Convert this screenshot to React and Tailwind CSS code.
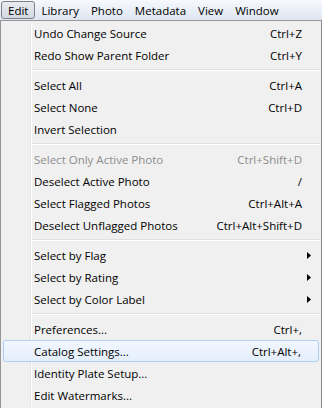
import React from 'react';

const font = { fontFamily: '"Open Sans", "Noto Sans", sans-serif' };

const groups = [
  [
    { label: 'Undo Change Source', shortcut: 'Ctrl+Z' },
    { label: 'Redo Show Parent Folder', shortcut: 'Ctrl+Y' },
  ],
  [
    { label: 'Select All', shortcut: 'Ctrl+A' },
    { label: 'Select None', shortcut: 'Ctrl+D' },
    { label: 'Invert Selection' },
  ],
  [
    { label: 'Select Only Active Photo', shortcut: 'Ctrl+Shift+D', disabled: true },
    { label: 'Deselect Active Photo', shortcut: '/' },
    { label: 'Select Flagged Photos', shortcut: 'Ctrl+Alt+A' },
    { label: 'Deselect Unflagged Photos', shortcut: 'Ctrl+Alt+Shift+D' },
  ],
  [
    { label: 'Select by Flag', submenu: true },
    { label: 'Select by Rating', submenu: true },
    { label: 'Select by Color Label', submenu: true },
  ],
  [
    { label: 'Preferences...', shortcut: 'Ctrl+,' },
    { label: 'Catalog Settings...', shortcut: 'Ctrl+Alt+,', active: true },
    { label: 'Identity Plate Setup...' },
    { label: 'Edit Watermarks...' },
  ],
];

const menus = ['Edit', 'Library', 'Photo', 'Metadata', 'View', 'Window'];

const Gutter = () => (
  <>
    <div className="w-[29px] shrink-0" />
    <div className="w-px self-stretch bg-[#e2e3e3]" />
    <div className="w-px self-stretch bg-white" />
  </>
);

const Arrow = () => (
  <svg width="4" height="7" viewBox="0 0 4 7" className="absolute right-[10px] top-[8px]">
    <path d="M0 0 L4 3.5 L0 7 Z" fill="#000" />
  </svg>
);

const MenuItem = ({ item }) => {
  const textCls = item.disabled ? 'text-[#8d8d8d]' : 'text-black';
  if (item.active) {
    return (
      <div className="h-[22px] px-[2px]">
        <div className="relative h-full flex items-center rounded-[3px] border border-[#aecff7] bg-gradient-to-b from-[#f2f7fe] to-[#e4eefb] pl-[30px] pr-[17px] pt-px">
          <span className={`flex-1 ${textCls}`}>{item.label}</span>
          {item.shortcut && <span className={textCls}>{item.shortcut}</span>}
        </div>
      </div>
    );
  }
  return (
    <div className="relative h-[22px] flex">
      <Gutter />
      <div className="flex-1 flex items-center pl-[2px] pr-[19px] pt-px">
        <span className={`flex-1 ${textCls}`}>{item.label}</span>
        {item.shortcut && <span className={textCls}>{item.shortcut}</span>}
      </div>
      {item.submenu && <Arrow />}
    </div>
  );
};

const Separator = () => (
  <div className="h-[8px] flex">
    <Gutter />
    <div className="flex-1 flex flex-col pt-[3px] pr-px">
      <div className="h-px bg-[#e0e0e0]" />
      <div className="h-px bg-white" />
    </div>
  </div>
);

export default function App() {
  return (
    <div className="w-[322px] h-[408px] overflow-hidden bg-white text-[11.5px] leading-none" style={font}>
      {/* menu bar */}
      <div className="h-[20px] flex items-stretch bg-gradient-to-b from-[#f6f9fd] to-[#dfe6f1] pl-px">
        {menus.map((m, i) => (
          <div
            key={m}
            className={`flex items-center px-[6px] pt-px ${
              i === 0
                ? 'mt-px mb-px rounded-[3px] border border-[#7d8188] bg-gradient-to-b from-[#e9ecf1] to-[#d4d9e1] px-[6px]'
                : ''
            }`}
          >
            {m}
          </div>
        ))}
      </div>

      {/* dropdown */}
      <div className="h-[388px] border-x border-t border-l-[#979797] border-r-[#8a8a8a] border-t-[#979797] bg-[#f0f0f0] pt-px">
        {groups.map((g, gi) => (
          <div key={gi}>
            {gi > 0 && <Separator />}
            {g.map((item) => (
              <MenuItem key={item.label} item={item} />
            ))}
          </div>
        ))}
      </div>
    </div>
  );
}
